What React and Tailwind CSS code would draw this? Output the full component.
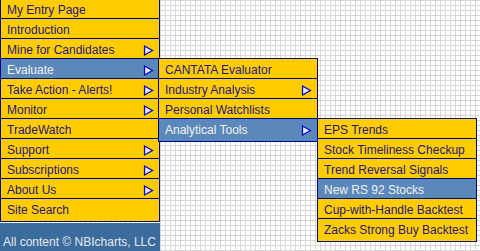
import React from "react";

const font = { fontFamily: '"Liberation Sans", Arial, sans-serif' };

function Arrow() {
  return (
    <svg width="11" height="11" viewBox="0 0 11 11" className="shrink-0 -mr-px">
      <polygon points="1.5,1 9.5,5.5 1.5,10" fill="#e4e4ff" stroke="#0000cc" strokeWidth="1.2" strokeLinejoin="miter" />
    </svg>
  );
}

function Item({ label, arrow, active, last, children }) {
  return (
    <div
      className={[
        "relative flex items-center justify-between border-t border-[#000080] pl-[6px] pr-[6px] pt-[4px] leading-[15px] whitespace-nowrap",
        last ? "h-[23px] pb-[3px]" : "h-[20px]",
        active ? "bg-[#5b88ba] text-[#f2f2f2]" : "bg-[#ffcc00] text-[#1f1778]",
      ].join(" ")}
    >
      <span>{label}</span>
      {arrow ? <Arrow /> : null}
      {children}
    </div>
  );
}

function Menu({ children, className = "" }) {
  return (
    <div className={`w-[160px] border-x border-b border-[#000080] bg-[#ffcc00] ${className}`}>
      {children}
    </div>
  );
}

export default function App() {
  return (
    <div
      className="relative h-[251px] w-[480px] overflow-hidden text-[12px] bg-white bg-[linear-gradient(to_right,#d6d6d6_1px,transparent_1px),linear-gradient(to_bottom,#d6d6d6_1px,transparent_1px)] bg-[size:5px_5px]"
      style={font}
    >
      <div className="flex h-full w-[160px] flex-col">
        <Menu className="-mt-[2px]">
          <Item label="My Entry Page" />
          <Item label="Introduction" />
          <Item label="Mine for Candidates" arrow />
          <Item label="Evaluate" arrow active>
            <div className="absolute left-[157px] top-[-1px] z-10">
              <Menu>
                <Item label="CANTATA Evaluator" />
                <Item label="Industry Analysis" arrow />
                <Item label="Personal Watchlists" />
                <Item label="Analytical Tools" arrow active last>
                  <div className="absolute left-[158px] top-[-1px] z-20">
                    <Menu>
                      <Item label="EPS Trends" />
                      <Item label="Stock Timeliness Checkup" />
                      <Item label="Trend Reversal Signals" />
                      <Item label="New RS 92 Stocks" active />
                      <Item label="Cup-with-Handle Backtest" />
                      <Item label="Zacks Strong Buy Backtest" last />
                    </Menu>
                  </div>
                </Item>
              </Menu>
            </div>
          </Item>
          <Item label="Take Action - Alerts!" arrow />
          <Item label="Monitor" arrow />
          <Item label="TradeWatch" />
          <Item label="Support" arrow />
          <Item label="Subscriptions" arrow />
          <Item label="About Us" arrow />
          <Item label="Site Search" last />
        </Menu>
        <div className="mt-px flex-1 bg-[#3b6c9e] pl-[3px] pt-[12px] leading-[15px] text-[#e8e8e8] whitespace-nowrap">
          All content © NBIcharts, LLC
        </div>
      </div>
    </div>
  );
}
